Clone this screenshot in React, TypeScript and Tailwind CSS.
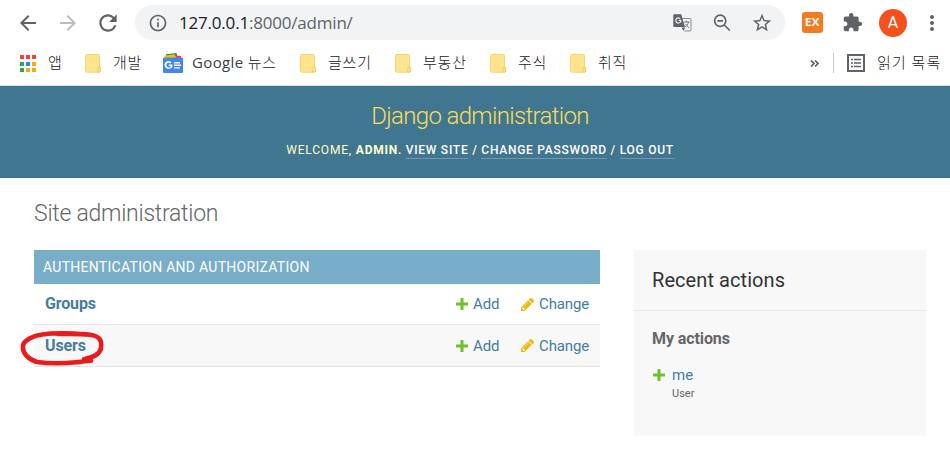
import type { ReactNode } from 'react';
import { MdArrowBack, MdArrowForward, MdRefresh, MdInfoOutline, MdStarBorder, MdExtension, MdMoreVert } from 'react-icons/md';

const APP_COLORS = ['#f24335', '#f24335', '#f24335', '#2fa35b', '#1e8ef5', '#f9ab05', '#2fa35b', '#f9ab05', '#f9ab05'];

function AppsGrid() {
  return (
    <svg className="ml-5 h-[17px] w-[17px] shrink-0" viewBox="0 0 17 17" shapeRendering="crispEdges">
      {APP_COLORS.map((c, i) => (
        <rect key={i} x={(i % 3) * 6} y={Math.floor(i / 3) * 6.5} width="4" height="4" fill={c} />
      ))}
    </svg>
  );
}

function Folder() {
  return (
    <svg className="h-[19px] w-4 shrink-0" viewBox="0 0 16 19">
      <path d="M1.5.5h12q1 0 1 1v11.4q1.2.3 1.2 1.6v2.2q0 1.3-1.2 1.5H1.5q-1 0-1-1V1.5q0-1 1-1z" fill="#ffe48f" stroke="#f8d566" />
      <path d="M12.8 18v-3.5q0-1.7 1.4-1.7t1.4 1.7v2.3q0 1.2-1.4 1.2z" fill="#ffe48f" stroke="#edc64d" strokeWidth=".8" />
    </svg>
  );
}

function GoogleNews() {
  return (
    <svg className="h-5 w-5 shrink-0" viewBox="0 0 20 20">
      <path d="M3 1.2 13.5 0l1 4H3z" fill="#0c9d58" />
      <path d="m9 2 9.3 1-.6 4H8z" fill="#ea4335" />
      <path d="m1.3 2.8 10-1.6L14 6H2z" fill="#fbbc04" />
      <rect y="4.6" width="20" height="15.4" rx="1" fill="#4285f4" />
      <path d="M5.8 11.4v1.5h1.9c-.2 1-1 1.5-1.9 1.5a2.3 2.3 0 1 1 1.5-4L8.5 9.200A4 4 0 1 0 9.600 12.200l-.1-.8z" fill="#fff" />
      <path d="M11 9h6v1.400h-6zM11 11.600h7v1.400h-7zM11 14.200h6v1.400h-6z" fill="#fff" />
    </svg>
  );
}

function Translate() {
  return (
    <svg className="mr-[21px] h-[18px] w-[19px] shrink-0" viewBox="0 0 19 18" fill="none">
      <path d="M8.500 4.500H17q1 0 1 1v10.500q0 1-1 1h-5.500" stroke="#8b8e92" />
      <path d="M1.300.3h6.900L12 13H1.300Q.3 13 .3 12V1.300Q.3.3 1.300.3zM8.500 13.500h3.700L10.500 17z" fill="#5f6368" />
      <path d="M8 6.300H5.700M8 6.300A2.600 2.600 0 1 1 7.100 4.500" stroke="#f1f3f4" strokeWidth="1.200" />
      <path d="M11 8h5.500M13.500 6.800V8M15.500 8c-.5 2.500-1.800 4-3.500 5M12.500 10l3.500 4" stroke="#777a7e" />
    </svg>
  );
}

function ZoomOut() {
  return (
    <svg className="mr-[20px] h-[18px] w-[18px] shrink-0" viewBox="0 0 18 18" fill="none" stroke="#5f6368" strokeWidth="1.700">
      <circle cx="7.200" cy="6.800" r="5.600" />
      <path d="M11.300 11l5.500 5.500M4.400 6.800H10" />
    </svg>
  );
}

function ReadingList() {
  return (
    <svg className="h-[18px] w-[18px] shrink-0" viewBox="0 0 18 18" fill="none" stroke="#5f6368">
      <rect x="1" y="1" width="16" height="16" strokeWidth="2" />
      <path d="M4 5.500h2M7 5.500h7M4 9h2M7 9h7M4 12.500h2M7 12.500h7" strokeWidth="1.500" />
    </svg>
  );
}

function Plus() {
  return (
    <svg className="h-3 w-3 shrink-0" viewBox="0 0 12 12">
      <path d="M5 0h2q.5 0 .5.500v4h4q.5 0 .5.500v2q0 .5-.5.500h-4v4q0 .5-.5.500H5q-.5 0-.5-.5v-4h-4Q0 7.500 0 7V5q0-.5.500-.5h4v-4Q4.500 0 5 0z" fill="#70bf2b" />
    </svg>
  );
}

function Pencil() {
  return (
    <svg className="h-[13px] w-[13px] shrink-0" viewBox="128 149 1515 1515">
      <path fill="#efb80b" d="M491 1536l91-91-235-235-91 91v107h128v128h107zm523-928q0-22-22-22-10 0-17 7l-542 542q-7 7-7 17 0 22 22 22 10 0 17-7l542-542q7-7 7-17zm-54-192l416 416-832 832h-416v-416zm683 96q0 53-37 90l-166 166-416-416 166-165q36-38 90-38 53 0 91 38l235 234q37 39 37 91z" />
    </svg>
  );
}

function Bookmark({ width, icon, gap, children }: { width: string; icon: ReactNode; gap: string; children: ReactNode }) {
  return (
    <div className={`flex shrink-0 items-center ${width} ${gap}`}>
      {icon}
      <span className="pb-[2px] whitespace-nowrap">{children}</span>
    </div>
  );
}

function ModelRow({ name, className }: { name: string; className: string }) {
  return (
    <div className={`flex items-center border-b border-[#e6e6e6] pr-[11px] pl-[11px] text-[#447e9b] ${className}`}>
      <span className="flex-1 text-base leading-5 font-bold tracking-[-0.15px]">{name}</span>
      <Plus />
      <span className="ml-[5px] w-12 text-[15px] leading-5 tracking-[-0.1px]">Add</span>
      <Pencil />
      <span className="ml-[5px] text-[15px] leading-5 tracking-[-0.15px]">Change</span>
    </div>
  );
}

export default function App() {
  return (
    <div className="relative h-[460px] w-[950px] overflow-hidden bg-white font-['Roboto',sans-serif]">
      <div className="flex h-[45px] items-center pl-4 text-[#5f6368]">
        <MdArrowBack className="mr-4 size-6" />
        <MdArrowForward className="mr-[15px] size-6 text-[#bbbdbf]" />
        <MdRefresh className="mr-[14px] size-[26px]" />
        <div className="flex h-[35px] w-[650px] items-center rounded-full bg-[#f1f3f4] pr-3 pl-[13px]">
          <MdInfoOutline className="size-5" />
          <span className="ml-[11px] flex-1 font-['Open_Sans',sans-serif] text-[17px] leading-6 tracking-[-0.2px]">
            <span className="text-[#202124]">127.0.0.1</span>:8000/admin/
          </span>
          <Translate />
          <ZoomOut />
          <MdStarBorder className="size-[22px]" />
        </div>
        <div className="ml-[17px] flex size-[21px] items-center justify-center rounded-[3px] bg-[#f47b20] text-white">
          <span className="scale-x-120 font-['Open_Sans',sans-serif] text-[10px] font-bold">EX</span>
        </div>
        <MdExtension className="ml-[19px] size-[21px]" />
        <div className="ml-4 flex size-7 items-center justify-center rounded-full bg-[#f4511e] text-base text-white">A</div>
        <MdMoreVert className="ml-[13px] size-6" />
      </div>

      <div className="flex h-[41px] items-center border-b border-[#dcdee0] pb-1 font-['Noto_Sans_CJK_KR',sans-serif] text-[15px] font-light tracking-[0.8px] text-[#202124]">
        <Bookmark width="w-[85px]" gap="gap-[11px]" icon={<AppsGrid />}>앱</Bookmark>
        <Bookmark width="w-[78px]" gap="gap-3" icon={<Folder />}>개발</Bookmark>
        <Bookmark width="w-[137px]" gap="gap-[9px]" icon={<GoogleNews />}>
          <span className="font-['Open_Sans','Noto_Sans_CJK_KR',sans-serif] font-normal tracking-[0.35px] text-[#3c4043]">Google </span>뉴스
        </Bookmark>
        <Bookmark width="w-[95px]" gap="gap-3" icon={<Folder />}>글쓰기</Bookmark>
        <Bookmark width="w-[95px]" gap="gap-3" icon={<Folder />}>부동산</Bookmark>
        <Bookmark width="w-20" gap="gap-3" icon={<Folder />}>주식</Bookmark>
        <Bookmark width="w-[240px]" gap="gap-3" icon={<Folder />}>취직</Bookmark>
        <svg className="h-[7px] w-[9px] shrink-0" viewBox="0 0 9 7" fill="none" stroke="#5f6368" strokeWidth="1.700">
          <path d="M1 .5 4 3.500 1 6.500M5 .5l3 3-3 3" />
        </svg>
        <div className="mr-[13px] ml-[14px] h-5 w-px bg-[#c6c8ca]" />
        <ReadingList />
        <span className="ml-3 pb-[2px] tracking-[1.2px] whitespace-nowrap">읽기 목록</span>
      </div>

      <header className="flex h-[92px] flex-col items-center bg-[#417690] pt-[15px] pl-[10px]">
        <h1 className="text-2xl leading-[30px] font-light tracking-[-0.66px] text-[#f5dd5d]">Django administration</h1>
        <div className="mt-[11px] text-xs leading-4 font-medium tracking-[0.74px] whitespace-nowrap text-[#ffc]">
          <span className="font-normal tracking-[0.82px]">WELCOME, </span>
          <strong className="font-bold">ADMIN</strong>.{' '}
          <span className="inline-block h-[17px] border-b border-white/25 text-white">VIEW SITE</span> /{' '}
          <span className="inline-block h-[17px] border-b border-white/25 text-white">CHANGE PASSWORD</span> /{' '}
          <span className="inline-block h-[17px] border-b border-white/25 text-white">LOG OUT</span>
        </div>
      </header>

      <main className="px-[34px] pt-[21px]">
        <h2 className="text-[23px] leading-[30px] font-light tracking-[-0.25px] text-[#666]">Site administration</h2>
        <div className="mt-[21px] flex items-start gap-[34px]">
          <section className="w-[566px] shrink-0">
            <h3 className="h-[34px] bg-[#79aec8] pl-[9px] text-sm leading-[34px] font-normal tracking-[0.28px] text-white">AUTHENTICATION AND AUTHORIZATION</h3>
            <ModelRow name="Groups" className="h-[41px]" />
            <ModelRow name="Users" className="h-[42px] bg-[#f8f8f8]" />
          </section>
          <aside className="h-[186px] w-[292px] shrink-0 bg-[#f8f8f8]">
            <h3 className="h-[61px] border-b border-[#e6e6e6] pl-[18px] text-xl leading-[60px] tracking-[0.07px] text-[#333]">Recent actions</h3>
            <div className="px-[18px] pt-[18px]">
              <h4 className="text-base leading-5 font-bold tracking-[-0.1px] text-[#666]">My actions</h4>
              <div className="mt-4 flex">
                <span className="mt-1 ml-[1px]"><Plus /></span>
                <div className="ml-[7px]">
                  <div className="text-[15px] leading-5 text-[#447e9b]">me</div>
                  <div className="text-[11px] leading-[18px] text-[#666]">User</div>
                </div>
              </div>
            </div>
          </aside>
        </div>
      </main>

      <svg className="absolute top-[325px] left-[15px] h-[45px] w-[95px]" viewBox="15 325 95 45" fill="none" stroke="#e81c1c" strokeWidth="4.600" strokeLinecap="round" strokeLinejoin="round">
        <path d="M87 334.500C71 333 52 333 42 334.500c-9 1-18 6-19 11-1 8 6 14 14 16.500 11 1.500 27 1.500 39 .3 5-.5 10-1.500 15-1.500l-7-1.500c10-2 16-6 17-11 1-8-1-12-11-13.500-8-1-23-1-32-.8" />
      </svg>
    </div>
  );
}
